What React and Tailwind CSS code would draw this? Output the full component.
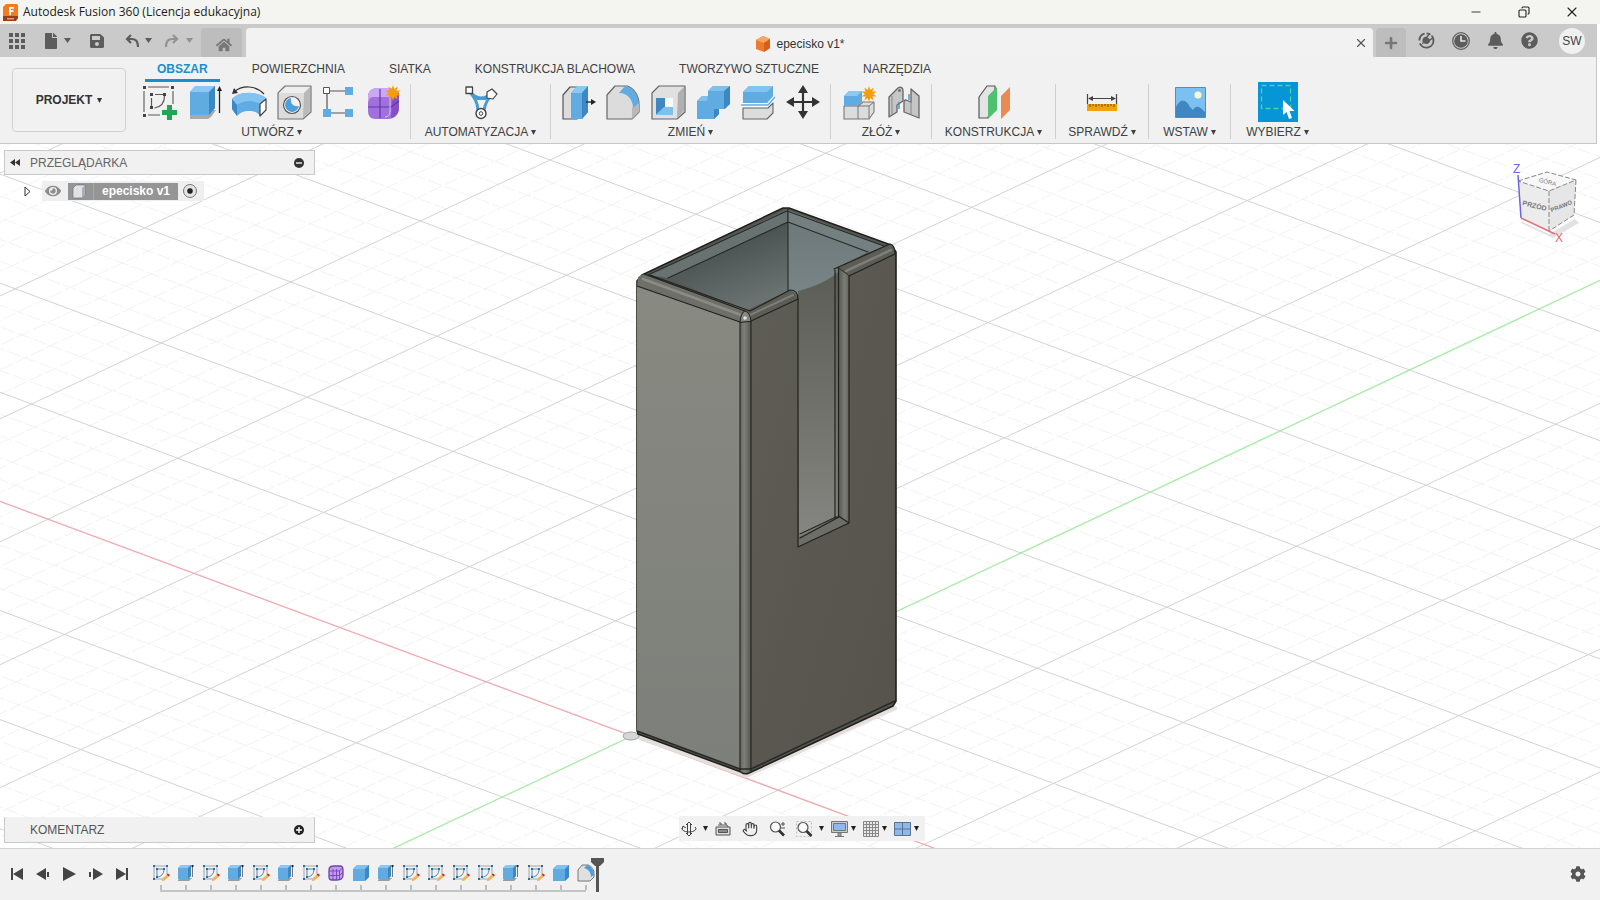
import React, { useState } from 'react'
import { FaBell, FaHome, FaPlus, FaSave, FaQuestionCircle, FaCog, FaFile, FaEye } from 'react-icons/fa'
import { Minus, X, Copy, Hand } from 'lucide-react'

const SKETCH_LINE = '#5a5a5a'
const BLUE = '#5fabe2'

function Caret({ large = false }) {
  return (
    <svg
      viewBox="0 0 7 6"
      preserveAspectRatio="none"
      className={large ? 'h-[5px] w-[7px] shrink-0' : 'h-[5px] w-[5px] shrink-0'}
      fill="currentColor"
      aria-hidden="true"
    >
      <path d="M0 0h7L3.500 6z" />
    </svg>
  )
}

function Icon({ children }) {
  return (
    <svg viewBox="0 0 36 36" className="h-9 w-9" fill="none" strokeLinejoin="round" aria-hidden="true">
      {children}
    </svg>
  )
}

function Burst({ cx, cy }) {
  const points = []
  for (let i = 0; i < 20; i++) {
    const r = i % 2 === 0 ? 8 : 4.2
    const a = (i * Math.PI) / 10
    points.push(`${cx + r * Math.sin(a)},${cy - r * Math.cos(a)}`)
  }
  return <polygon points={points.join(' ')} fill="#f59c0b" />
}

const icons = {
  sketch: (
    <Icon>
      <path d="M7 3h21M3 7v21M7 31h12M32 7v13" stroke={SKETCH_LINE} strokeWidth="1.100" />
      <path d="M14 10.500h8M10.500 14v8M23.500 12c0 7-4 11-10 12" stroke={SKETCH_LINE} strokeWidth="1.200" />
      <path d="M2 2h3v3H2zM30 2h3v3h-3zM2 30h3v3H2zM9 9h3v3H9zM22 9h3v3h-3zM9 22h3v3H9z" fill="#444" />
      <path d="M26 21h5v5h5v5h-5v5h-5v-5h-5v-5h5z" fill="#21a651" />
    </Icon>
  ),
  extrude: (
    <Icon>
      <path d="M4 31l6-5h20l-5 7-3 2H4z" fill="#a9a9a9" />
      <path d="M4 8l5-6h20v22l-6 7H4z" fill={BLUE} />
      <path d="M4 8l5-6h20l-6 6z" fill="#8cc8f2" />
      <path d="M23 8l6-6v22l-6 7z" fill="#3c88c4" />
      <path d="M33.500 29V6" stroke="#222" strokeWidth="1.300" />
      <path d="M31 7l2.500-5L36 7z" fill="#222" />
    </Icon>
  ),
  revolve: (
    <Icon>
      <path d="M3 8c8-7 22-7 30 2" stroke="#333" strokeWidth="1.200" />
      <path d="M1 10l2-6 4 5z" fill="#333" />
      <path d="M1 15c5-5 9-6 17-6s13 2 17 5l-6 5v13c-3-4-6-5-11-5s-8 1-12 5l-5-7z" fill={BLUE} />
      <path d="M1 15l5 6c7-5 17-5 23-1l6-6c-9-7-26-7-34 1z" fill="#83c3ef" />
      <path d="M6 21v11l-5-7V15z" fill="#3c88c4" />
      <path d="M29 20l6-5v11l-6 6z" fill="#fff" stroke="#444" strokeWidth="1.200" />
    </Icon>
  ),
  hole: (
    <Icon>
      <path d="M2 9l7-7h26v26l-8 7H2z" fill="#dcdcdc" stroke="#777" strokeWidth="1.200" />
      <path d="M3 9l7-6h24l-6 6z" fill="#eee" />
      <path d="M28 9l6-6v24l-7 7z" fill="#b9b9b9" />
      <circle cx="16" cy="21" r="8.500" fill="#f2f2f2" stroke="#555" strokeWidth="1.200" />
      <path d="M15 14a7 7 0 1 0 8 8c-5 1-9-2-8-8z" fill="#4d9fdb" />
    </Icon>
  ),
  pattern: (
    <Icon>
      <path d="M6 7h26M6 7v22M6 29h26" stroke="#555" strokeWidth="1.200" />
      <path d="M2.500 3.500h6v6h-6z" fill="#fff" stroke="#555" />
      <path d="M24 3h8v8h-8zM2 25h8v8H2zM24 25h8v8h-8z" fill={BLUE} />
    </Icon>
  ),
  form: (
    <Icon>
      <path d="M2 13c0-6 4-9 10-9h9c7 0 12 4 12 9v11c0 7-5 11-11 11H10c-6 0-8-3-8-9z" fill="#a070dc" />
      <path d="M2 13c0-6 4-9 10-9h9c5 0 8 2 10 5l-5 4H8c-4 0-5 2-6 6z" fill="#cba8f5" />
      <path d="M26 13c3-1 5-3 7-5v17c-1 5-4 8-8 9z" fill="#8550c4" />
      <path d="M14 5v29M2 23h23l8-6" stroke="#6636a8" strokeWidth="1.200" />
      <path d="M24 13v15c0 3-2 5-5 5" stroke="#d9bdf8" />
      <Burst cx={27} cy={9} />
    </Icon>
  ),
  automate: (
    <Icon>
      <path d="M6 7c4 4 7 7 12 7s8-2 12-5c-4 5-8 9-9 18h-6C15 18 11 13 6 7z" fill="#f4f4f4" stroke="#4a9ad4" strokeWidth="3" />
      <path d="M6 7c4 4 7 7 12 7s8-2 12-5l-7 7h-9z" fill="#4a9ad4" />
      <path d="M3 3h6.500v6.500H3z" fill="#fff" stroke="#444" strokeWidth="1.300" />
      <path d="M29 5l5 5-4 5-6-1v-6z" fill="#fff" stroke="#444" strokeWidth="1.200" />
      <circle cx="18" cy="29.500" r="5" fill="#fff" stroke="#444" strokeWidth="1.400" />
      <circle cx="18" cy="29.500" r="1.800" stroke="#444" />
    </Icon>
  ),
  pressPull: (
    <Icon>
      <path d="M3 11l7-8h7v32H3z" fill="#dcdcdc" stroke="#555" strokeWidth="1.200" />
      <path d="M11 9l6-7h11v26l-6 7H11z" fill={BLUE} />
      <path d="M11 9l6-7h11l-6 7z" fill="#8cc8f2" />
      <path d="M22 9l6-7v26l-6 7z" fill="#3c88c4" />
      <path d="M26 18h7" stroke="#222" strokeWidth="1.300" />
      <path d="M31 15l5 3-5 3z" fill="#222" />
    </Icon>
  ),
  fillet: (
    <Icon>
      <path d="M2 11l8-9h12c7 2 12 10 12 18v8l-7 7H2z" fill="#dcdcdc" stroke="#666" strokeWidth="1.200" />
      <path d="M27 24l7-5v9l-7 7z" fill="#b9b9b9" />
      <path d="M14 9l6-7c8 1 13 8 14 17l-6 5c0-8-5-15-14-15z" fill={BLUE} />
    </Icon>
  ),
  shell: (
    <Icon>
      <path d="M2 9l7-7h26v26l-8 7H2z" fill="#e0e0e0" stroke="#666" strokeWidth="1.200" />
      <path d="M28 9l6-6v24l-7 7z" fill="#b0b0b0" />
      <path d="M6 14h17v17H6z" fill="#fafafa" />
      <path d="M6 14h9v9l-9 8z" fill="#3c88c4" />
      <path d="M6 31l8-8h9v8z" fill="#7fc0ee" />
    </Icon>
  ),
  combine: (
    <Icon>
      <path d="M2 17l5-5h6V7l5-5h17v18l-5 5h-6v5l-5 5H2z" fill={BLUE} />
      <path d="M2 17l5-5h6l-1 5zM13 7l5-5h17l-6 5z" fill="#7fc0ee" />
      <path d="M29 7l6-5v18l-6 5zM19 25h5v5l-5 5z" fill="#3c88c4" />
    </Icon>
  ),
  split: (
    <Icon>
      <path d="M3 8l6-6h24v12l-6 6H3z" fill={BLUE} />
      <path d="M3 8l6-6h24l-6 6z" fill="#83c3ef" />
      <path d="M1 21h27l7-8" stroke="#fff" strokeWidth="4" />
      <path d="M1 21h27l7-8" stroke={BLUE} strokeWidth="1.400" />
      <path d="M3 24h25l5-5v10l-6 6H3z" fill="#dcdcdc" stroke="#666" strokeWidth="1.100" />
    </Icon>
  ),
  move: (
    <Icon>
      <path d="M18 6v24M6 18h24" stroke="#333" strokeWidth="2.200" />
      <path d="M18 1l5 8H13zM18 35l5-8H13zM1 18l8-5v10zM35 18l-8-5v10z" fill="#333" />
    </Icon>
  ),
  component: (
    <Icon>
      <path d="M3 22h14l5-4h11v10l-5 7H3z" fill="#dcdcdc" stroke="#777" strokeWidth="1.100" />
      <path d="M17 22v13M28 22v13M17 22h11l5-4" stroke="#777" />
      <path d="M3 12l5-5h13v11l-5 4H3z" fill={BLUE} />
      <path d="M3 12l5-5h13l-5 5z" fill="#8cc8f2" />
      <Burst cx={28} cy={10} />
    </Icon>
  ),
  joint: (
    <Icon>
      <path d="M3 13l9-9c3-2 5 0 5 3v10l-6 4v7l-8 5z" fill="#c6c6c6" stroke="#666" strokeWidth="1.300" />
      <path d="M6 12v19" stroke="#888" />
      <circle cx="13.500" cy="6.500" r="1.500" fill="#777" />
      <path d="M33 34V12l-8-7v13l-5-2c-2 0-2 1-2 2v10z" fill="#c6c6c6" stroke="#666" strokeWidth="1.300" />
      <path d="M25 18v12" stroke="#888" />
      <path d="M13 18v7M23 10v6" stroke="#3c88c4" strokeWidth="1.300" />
    </Icon>
  ),
  plane: (
    <Icon>
      <path d="M3 13l8-11h8v5l-7 27H3z" fill="#e4e4e4" stroke="#555" strokeWidth="1.200" />
      <path d="M12 12l9-9v23l-9 9z" fill="#4fbf72" />
      <path d="M25 12l9-9v23l-9 9z" fill="#e98a54" />
    </Icon>
  ),
  measure: (
    <Icon>
      <path d="M3.500 10v10M32.500 10v10M5 14.500h26" stroke="#444" strokeWidth="1.200" />
      <path d="M4 14.500l5-2.500v5zM32 14.500l-5-2.500v5z" fill="#444" />
      <path d="M3 20h30v7H3z" fill="#f5a10b" />
      <path d="M6 20v3M9 20v2M12 20v3M15 20v2M18 20v3M21 20v2M24 20v3M27 20v2M30 20v3" stroke="#6b4a08" />
    </Icon>
  ),
  image: (
    <Icon>
      <path d="M3.500 3.500h30v30h-30z" fill="#7cc0f2" stroke="#4a90c2" />
      <circle cx="26" cy="11" r="3.500" fill="#fdf8d0" />
      <path d="M4 23c4-8 9-9 14 0l3 3c3-5 6-4 12 2v5H4z" fill="#3f87c0" />
    </Icon>
  ),
}

const sketchFeature = (
  <svg viewBox="0 0 18 18" className="h-[18px] w-[18px]" fill="none" aria-hidden="true">
    <path d="M3 2h11M2 3v11M3 15h8M15 3v7" stroke="#8a979f" strokeWidth=".8" />
    <path d="M5 5h7M5 5v8c4 0 7-3 7-8" stroke="#4c87b3" />
    <path d="M1 1h2v2H1zM14 1h2v2h-2zM1 14h2v2H1zM4 4h2v2H4zM11 4h2v2h-2zM4 12h2v2H4z" fill="#2f6d9c" />
    <path d="M10.500 14.500l4.500-4 2 2-4.500 4-2.500.8z" fill="#f2b456" />
    <path d="M14.500 10.500L16 9.500l2 1.500-1.300 1.500z" fill="#d92525" />
  </svg>
)

const extrudeFeature = (
  <svg viewBox="0 0 18 18" className="h-[18px] w-[18px]" fill="none" aria-hidden="true">
    <path d="M1 16l2-2h12l-3 3H1z" fill="#9c9c9c" />
    <path d="M1 4l3-3h10v11l-3 3H1z" fill={BLUE} />
    <path d="M1 4l3-3h10l-3 3z" fill="#8cc8f2" />
    <path d="M11 4l3-3v11l-3 3z" fill="#3c88c4" />
    <path d="M15.500 13V3" stroke="#777" />
    <path d="M14.500 1h2v2h-2z" fill="#222" />
  </svg>
)

const boxFeature = (
  <svg viewBox="0 0 18 18" className="h-[18px] w-[18px]" aria-hidden="true">
    <path d="M1 5l4-4h12v12l-4 4H1z" fill={BLUE} />
    <path d="M1 5l4-4h12l-4 4z" fill="#7fc0ee" />
    <path d="M13 5l4-4v12l-4 4z" fill="#3c88c4" />
  </svg>
)

const formFeature = (
  <svg viewBox="0 0 18 18" className="h-[18px] w-[18px]" fill="none" aria-hidden="true">
    <path d="M2 6c0-3 2-4 5-4h6c3 0 3 2 3 4v5c0 4-3 5-6 5H5c-2 0-3-1-3-3z" fill="#c39bef" stroke="#6f42ad" strokeWidth="1.300" />
    <path d="M2 7h10l4-3M2 11.500h10l4-3M6 5v11M9.500 5v11M12.500 6v9" stroke="#7a4cb8" />
  </svg>
)

const filletFeature = (
  <svg viewBox="0 0 18 18" className="h-[18px] w-[18px]" aria-hidden="true">
    <path d="M1 6l4-5h6c4 1 6 5 6 9v3l-4 4H1z" fill="#e0e0e0" stroke="#777" />
    <path d="M7 4l3-3c4 1 7 5 7 10l-3 2c0-5-3-8-7-9z" fill="#4d9fdb" />
  </svg>
)

const featureIcons = {
  sketch: sketchFeature,
  extrude: extrudeFeature,
  box: boxFeature,
  form: formFeature,
  fillet: filletFeature,
}

const timeline = [
  'sketch', 'extrude', 'sketch', 'extrude', 'sketch', 'extrude', 'sketch', 'form', 'box',
  'extrude', 'sketch', 'sketch', 'sketch', 'sketch', 'extrude', 'sketch', 'box', 'fillet',
]

const tabs = [
  'OBSZAR',
  'POWIERZCHNIA',
  'SIATKA',
  'KONSTRUKCJA BLACHOWA',
  'TWORZYWO SZTUCZNE',
  'NARZĘDZIA',
]

const groups = [
  { label: 'UTWÓRZ', width: 'w-[278px]', tools: ['sketch', 'extrude', 'revolve', 'hole', 'pattern', 'form'] },
  { label: 'AUTOMATYZACJA', width: 'w-[140px]', tools: ['automate'] },
  { label: 'ZMIEŃ', width: 'w-[280px]', tools: ['pressPull', 'fillet', 'shell', 'combine', 'split', 'move'] },
  { label: 'ZŁÓŻ', width: 'w-[101px]', tools: ['component', 'joint'] },
  { label: 'KONSTRUKCJA', width: 'w-[124px]', tools: ['plane'] },
  { label: 'SPRAWDŹ', width: 'w-[93px]', tools: ['measure'] },
  { label: 'WSTAW', width: 'w-[82px]', tools: ['image'] },
]

function TitleBar() {
  return (
    <header className="flex h-6 shrink-0 items-center bg-[#f4f5f0] pl-[3px] pr-1">
      <svg viewBox="0 0 16 17" className="h-[17px] w-4" aria-hidden="true">
        <path d="M0 3l3-3h11l1 1v13l-3 3H0z" fill="#f47a1f" />
        <path d="M0 12h15v2l-2 3H0z" fill="#9c3d10" />
        <path d="M6 3h5v1.800H8v1.400h2.500V8H8v3H6z" fill="#fff" />
        <path d="M4 14h7v1.500H4z" fill="#e0a27c" />
      </svg>
      <h1 className="ml-1 flex-1 whitespace-nowrap font-['Open_Sans',sans-serif] text-[12px] text-[#1d1d1d]">
        Autodesk Fusion 360 (Licencja edukacyjna)
      </h1>
      <button aria-label="Minimalizuj" className="flex h-6 w-12 items-center justify-center text-[#222]">
        <Minus size={14} strokeWidth={1.5} />
      </button>
      <button aria-label="Przywróć" className="flex h-6 w-12 items-center justify-center text-[#222]">
        <Copy size={12} strokeWidth={2.2} className="-scale-x-100" />
      </button>
      <button aria-label="Zamknij" className="flex h-6 w-12 items-center justify-center text-[#222]">
        <X size={16} strokeWidth={1.7} />
      </button>
    </header>
  )
}

function DocumentBar() {
  return (
    <div className="mr-[3px] flex h-[33px] shrink-0 items-end bg-[#cacaca] text-[#5c5c5c]">
      <div className="flex h-[33px] w-[201px] items-center pl-[9px]">
        <button aria-label="Panel danych">
          <svg viewBox="0 0 16 16" className="h-4 w-4" fill="currentColor">
            <path d="M0 0h4v4H0zM6 0h4v4H6zM12 0h4v4h-4zM0 6h4v4H0zM6 6h4v4H6zM12 6h4v4h-4zM0 12h4v4H0zM6 12h4v4H6zM12 12h4v4h-4z" />
          </svg>
        </button>
        <button aria-label="Plik" className="ml-[18px] flex items-center gap-[5px]">
          <FaFile size={16} />
          <Caret large />
        </button>
        <button aria-label="Zapisz" className="ml-[18px]">
          <FaSave size={16} />
        </button>
        <button aria-label="Cofnij" className="ml-5 flex items-center gap-[6px]">
          <svg viewBox="0 0 14 14" className="h-[14px] w-[14px]" fill="none" stroke="currentColor" strokeWidth="2.200">
            <path d="M6 1L2 5l4 4M2 5h5c4 0 6 3 6 8" />
          </svg>
          <Caret large />
        </button>
        <button aria-label="Ponów" className="ml-[13px] flex items-center gap-[7px] text-[#929292]">
          <svg viewBox="0 0 14 14" className="h-[14px] w-[14px]" fill="none" stroke="currentColor" strokeWidth="2.200">
            <path d="M8 1l4 4-4 4M12 5H7c-4 0-6 3-6 8" />
          </svg>
          <Caret large />
        </button>
      </div>
      <button aria-label="Strona główna" className="flex h-[29px] w-[41px] items-center justify-center rounded-t bg-[#bdbdbd] pl-[5px] pt-1 text-[#777]">
        <FaHome size={16} />
      </button>
      <div className="ml-1 flex h-[29px] flex-1 items-center rounded-t bg-[#f2f2f2]">
        <div className="flex flex-1 items-center justify-center gap-[5px] pt-[2px] text-[12px] text-[#333]">
          <svg viewBox="0 0 16 16" className="h-4 w-4" aria-hidden="true">
            <path d="M8 0l7 3v9l-6 4-8-3V4z" fill="#ee7a30" />
            <path d="M8 0l7 3-6 4-8-3z" fill="#f9a566" />
            <path d="M9 7l6-4v9l-6 4z" fill="#d95e1a" />
          </svg>
          <span>epecisko v1*</span>
        </div>
        <button aria-label="Zamknij dokument" className="mr-[5px] text-[#555]">
          <X size={14} strokeWidth={2} />
        </button>
      </div>
      <button aria-label="Nowy dokument" className="ml-[3px] flex h-[29px] w-[30px] items-center justify-center rounded-t bg-[#bdbdbd] text-[#777]">
        <FaPlus size={14} />
      </button>
      <div className="flex h-[33px] items-center pl-3 pr-3">
        <button aria-label="Rozszerzenia">
          <svg viewBox="0 0 18 18" className="h-[17px] w-[17px]" fill="none">
            <path d="M9 1.500A7.500 7.500 0 1 1 2 12M1.500 9A7.500 7.500 0 0 1 7 1.800" stroke="currentColor" strokeWidth="2" />
            <path d="M3 14l3-2c4 2 7 0 7-4L9 5c-3 0-5 2-4 6z" fill="currentColor" />
            <path d="M9 6l3-4M12 9l4-3" stroke="currentColor" strokeWidth="1.600" />
            <path d="M12 4.500l3.500-2.500" stroke="#cacaca" strokeWidth="1.500" />
          </svg>
        </button>
        <button aria-label="Stan zadań" className="ml-[17px]">
          <svg viewBox="0 0 18 18" className="h-[18px] w-[18px]" fill="none">
            <circle cx="9" cy="9" r="8.300" stroke="currentColor" strokeWidth="1.200" />
            <circle cx="9" cy="9" r="6.800" fill="currentColor" />
            <path d="M9 4v5h4.500" stroke="#e6e6e6" strokeWidth="1.600" />
          </svg>
        </button>
        <button aria-label="Powiadomienia" className="ml-[17px]">
          <FaBell size={17} />
        </button>
        <button aria-label="Pomoc" className="ml-[17px]">
          <FaQuestionCircle size={17} />
        </button>
        <button className="ml-[21px] flex h-[26px] w-[26px] items-center justify-center rounded-full bg-[#f0f0f0] text-[12px] text-[#444]">
          SW
        </button>
      </div>
    </div>
  )
}

function Ribbon({ activeTab, onTabChange }) {
  return (
    <div className="mr-[3px] flex h-[87px] shrink-0 border-b border-r border-[#c6c6c6] bg-[#f1f1f1] text-[12px] text-[#404040]">
      <button className="ml-3 mt-[11px] flex h-[64px] w-[114px] shrink-0 items-center justify-center gap-[5px] rounded border border-[#d0d0d0] font-bold text-[#333]">
        PROJEKT
        <Caret />
      </button>
      <div className="ml-[7px]">
        <nav className="ml-3 flex h-[25px] gap-5">
          {tabs.map((tab) => (
            <button
              key={tab}
              onClick={() => onTabChange(tab)}
              className={`h-[25px] whitespace-nowrap border-b-3 px-3 pt-[2px] ${
                tab === activeTab ? 'border-[#1a8fd0] font-bold text-[#1a8fd0]' : 'border-transparent'
              }`}
            >
              {tab}
            </button>
          ))}
        </nav>
        <div className="mt-[2px] flex h-[55px]">
          {groups.map((group) => (
            <div key={group.label} className={`flex shrink-0 flex-col items-center justify-between border-r border-[#cfcfcf] ${group.width}`}>
              <div className="flex gap-[9px]">
                {group.tools.map((tool) => (
                  <button key={tool} aria-label={tool}>
                    {icons[tool]}
                  </button>
                ))}
              </div>
              <button className="flex items-center gap-[3px] whitespace-nowrap leading-[14px]">
                {group.label}
                <Caret />
              </button>
            </div>
          ))}
          <div className="flex w-[93px] flex-col items-center justify-between">
            <button aria-label="Wybierz" className="-mt-[2px]">
              <svg viewBox="0 0 40 40" className="h-10 w-10" fill="none">
                <path d="M0 0h40v40H0z" fill="#0696d7" />
                <path d="M3.500 3.500h29v23h-29z" stroke="#4fd0a0" strokeWidth="1.400" strokeDasharray="5 3" />
                <path d="M25 18v15l3.500-3 2.500 7 3-1-2.500-7h5z" fill="#fff" />
              </svg>
            </button>
            <button className="flex items-center gap-[3px] leading-[14px]">
              WYBIERZ
              <Caret />
            </button>
          </div>
        </div>
      </div>
    </div>
  )
}

// Ground plane: origin and the two major grid steps in screen units
const ORIGIN = [632, 736]
const STEP_X = [146, 54.2]
const STEP_Y = [129.6, -61]
const REACH = 16

function gridPoint(m, n) {
  return [
    ORIGIN[0] + m * STEP_X[0] + n * STEP_Y[0],
    ORIGIN[1] + m * STEP_X[1] + n * STEP_Y[1],
  ]
}

function gridPath(divisions) {
  let d = ''
  for (let i = -REACH * divisions; i <= REACH * divisions; i++) {
    if (divisions > 1 && i % divisions === 0) continue
    const k = i / divisions
    d += `M${gridPoint(k, -REACH)}L${gridPoint(k, REACH)}M${gridPoint(-REACH, k)}L${gridPoint(REACH, k)}`
  }
  return d
}

function Grid() {
  return (
    <g fill="none">
      <path d={gridPath(5)} stroke="#f3f3f3" strokeDasharray="14 3" />
      <path d={gridPath(1)} stroke="#d3d3d3" />
      <path d={`M${gridPoint(-REACH, 0)}L${gridPoint(REACH, 0)}`} stroke="#f6a9b0" strokeWidth="1.200" />
      <path d={`M${gridPoint(0, -REACH)}L${gridPoint(0, REACH)}`} stroke="#a6f0a6" strokeWidth="1.200" />
    </g>
  )
}

function Model() {
  return (
    <g strokeLinejoin="round" strokeLinecap="round">
      <defs>
        <linearGradient id="front" x1="0" y1="0" x2="0" y2="1">
          <stop offset="0" stopColor="#888981" />
          <stop offset="1" stopColor="#7d7f7a" />
        </linearGradient>
        <linearGradient id="side" x1="0" y1="0" x2="1" y2="1">
          <stop offset="0" stopColor="#5e5d56" />
          <stop offset="1" stopColor="#55534b" />
        </linearGradient>
        <linearGradient id="edge" x1="0" y1="0" x2="1" y2="0">
          <stop offset="0" stopColor="#666761" />
          <stop offset=".4" stopColor="#7e7f79" />
          <stop offset="1" stopColor="#55554f" />
        </linearGradient>
        <linearGradient id="innerLeft" x1="0" y1="0" x2=".5" y2="1">
          <stop offset="0" stopColor="#414848" />
          <stop offset=".45" stopColor="#4d5555" />
          <stop offset="1" stopColor="#6a7171" />
        </linearGradient>
        <linearGradient id="innerRight" x1="0" y1="0" x2="0" y2="1">
          <stop offset="0" stopColor="#6c7879" />
          <stop offset="1" stopColor="#7a8687" />
        </linearGradient>
        <linearGradient id="slot" x1="0" y1="0" x2="0" y2="1">
          <stop offset="0" stopColor="#5d5d57" />
          <stop offset=".5" stopColor="#71716b" />
          <stop offset="1" stopColor="#858681" />
        </linearGradient>
        <linearGradient id="slotEdge" x1="0" y1="0" x2="1" y2="0">
          <stop offset="0" stopColor="#55554f" />
          <stop offset=".6" stopColor="#7b7c76" />
          <stop offset="1" stopColor="#63635c" />
        </linearGradient>
      </defs>

      <path d="M640 738L746 776L895 708" fill="none" stroke="#e4dede" strokeWidth="4" />
      <ellipse cx="631" cy="736" rx="8" ry="4" fill="#d6d6d6" stroke="#a5a5a5" />

      <path d="M637 281L642 275L783 208L789 208L891 245L896 252V701L893 706L749 773Q745 775 741 772L638 734L637 729Z" fill="#555751" stroke="#20201c" strokeWidth="1.600" />

      {/* inside of the box */}
      <path d="M648 275L787 210V222L668 278Z" fill="#687371" />
      <path d="M788 210L884 246L868 253L788 222Z" fill="#748080" />
      <path d="M668 278L788 222V300L745 311Z" fill="url(#innerLeft)" />
      <path d="M788 222L868 252L838 268V290L800 300L788 291Z" fill="url(#innerRight)" />
      <path d="M798 291Q825 284 838 272V518L799 537Z" fill="url(#slot)" />
      <path d="M648 275L787 211L884 246M668 278L788 222L868 252M788 209V291" fill="none" stroke="#252a29" strokeWidth="1.100" />

      {/* outer faces */}
      <path d="M637 286L740 322V769L637 731Z" fill="url(#front)" />
      <path d="M751 321L798 299V547L849 523V276L895 254V701L751 769Z" fill="url(#side)" />
      <path d="M740 319H751V771Q746 775 740 771Z" fill="url(#edge)" />
      <path d="M637 731L740 769L751 769L895 701" fill="none" stroke="#292924" strokeWidth="1.600" />
      <path d="M740 319V771M751 319V771" fill="none" stroke="#24241f" strokeWidth="1.100" />

      {/* rounded rim */}
      <path d="M637 286L638 277L644 274L745 311L740 322Z" fill="#6e6f69" />
      <path d="M643 279L741 315" fill="none" stroke="#8b8c85" strokeWidth="2.500" />
      <path d="M745 311L789 291Q796 290 798 299L751 321Z" fill="#5c5d57" />
      <path d="M750 315L793 295" fill="none" stroke="#7d7e78" strokeWidth="2" />
      <path d="M637 286L740 322M644 274L745 311M650 275L750 311L790 290Q798 290 798 299L751 321" fill="none" stroke="#22221e" strokeWidth="1.200" />
      <path d="M740 322Q741 312 745 311Q750 312 751 321Z" fill="#85867f" stroke="#22221e" />
      <circle cx="745" cy="318" r="1.800" fill="#e4e5df" />
      <path d="M838 268L890 244Q895 245 895 254L849 276Z" fill="#5c5d57" />
      <path d="M846 271L891 250" fill="none" stroke="#7d7e78" strokeWidth="2.500" />
      <path d="M834 269L890 244Q895 245 895 254L849 276L838 268" fill="none" stroke="#22221e" strokeWidth="1.200" />

      {/* slot edges */}
      <path d="M838 268L849 276V523L838 516Z" fill="url(#slotEdge)" />
      <path d="M838 516L849 523L798 547L799 537Z" fill="#6d6e68" />
      <path d="M835 270V517M838.500 268V516L849 523V276M798 299V547L849 523M800 534L836 517L839 517L800 538" fill="none" stroke="#22221e" strokeWidth="1.200" />
    </g>
  )
}

function ViewCube() {
  return (
    <svg viewBox="0 0 70 90" className="absolute right-[17px] top-[15px] h-[90px] w-[70px]">
      <path d="M8 62L36 75L62 60L66 64L40 79L8 64Z" fill="#e2e2e2" />
      <path d="M5 22L34 13L63 21L36 32Z" fill="#f8f8f8" />
      <path d="M5 22L36 32V72L8 59Z" fill="#ececec" />
      <path d="M36 32L63 21L61 56L36 72Z" fill="#e6e6e6" />
      <path d="M5 22L34 13L63 21L36 32ZM36 32V72M63 21L61 56L36 72" fill="none" stroke="#888" strokeDasharray="5 2" />
      <path d="M5 16L8 59" stroke="#6b66dc" strokeWidth="1.500" />
      <path d="M8 59L42 75" stroke="#dc7280" strokeWidth="1.500" />
      <g fill="#777" fontSize="7" fontWeight="bold" textAnchor="middle">
        <text x="21" y="49" transform="rotate(14 21 49)">PRZÓD</text>
        <text x="49" y="49" fontSize="6" transform="rotate(-22 49 49)">PRAWO</text>
        <text x="34" y="25" fontSize="6" fontWeight="normal" transform="rotate(14 34 25)">GÓRA</text>
      </g>
      <text x="0" y="14" fontSize="12" fill="#6b66dc">Z</text>
      <text x="42" y="83" fontSize="12" fill="#e2656c">X</text>
    </svg>
  )
}

function BrowserPanel() {
  return (
    <div className="absolute left-1 top-[6px] w-[311px]">
      <div className="flex h-[25px] items-center border border-[#c9c9c9] bg-[#f1f1f1] pl-[5px] pr-[10px] text-[12px] text-[#666]">
        <button aria-label="Zwiń panel">
          <svg viewBox="0 0 10 7" className="h-[7px] w-[10px]" fill="#333">
            <path d="M5 0v7L0 3.500zM10 0v7L5 3.500z" />
          </svg>
        </button>
        <h2 className="ml-[10px] flex-1">PRZEGLĄDARKA</h2>
        <button aria-label="Ukryj">
          <svg viewBox="0 0 10 10" className="h-[10px] w-[10px]">
            <circle cx="5" cy="5" r="5" fill="#333" />
            <path d="M2 4.200h6v1.600H2z" fill="#ddd" />
          </svg>
        </button>
      </div>
      <div className="mt-[6px] flex h-[20px] items-center pl-5">
        <button aria-label="Rozwiń" className="mr-[11px]">
          <svg viewBox="0 0 7 11" className="h-[11px] w-[7px]" fill="#fff" stroke="#333">
            <path d="M1 1l5 4.500L1 10z" />
          </svg>
        </button>
        <div className="flex h-[20px] items-center bg-[#efefef] pl-[3px] pr-[7px]">
          <button aria-label="Widoczność" className="mr-[7px] text-[#8d8d8d]">
            <FaEye size={16} />
          </button>
          <div className="flex h-[17px] w-[110px] items-center bg-[#959595] text-[12px] font-bold text-white">
            <span className="flex h-[17px] w-[26px] items-center border-r border-[#a8a8a8] pl-1">
              <svg viewBox="0 0 14 15" className="h-[15px] w-[14px]">
                <path d="M1 4l3-3h9v10l-3 3H1z" fill="#dfe3e6" stroke="#6e747a" strokeWidth=".7" />
                <path d="M10 4l3-3v10l-3 3z" fill="#aab0b5" />
              </svg>
            </span>
            <span className="flex-1 text-center">epecisko v1</span>
          </div>
          <input
            type="radio"
            name="component"
            aria-label="Aktywuj komponent"
            defaultChecked
            className="ml-[5px] h-[14px] w-[14px] appearance-none rounded-full border border-[#777] bg-radial from-[#222] from-25% to-[#e4e4e4] to-40%"
          />
        </div>
      </div>
    </div>
  )
}

function CommentPanel() {
  return (
    <div className="absolute bottom-[5px] left-1 flex h-[26px] w-[311px] items-center border-x border-b border-[#c9c9c9] bg-[#f1f1f1] pl-[25px] pr-[10px] text-[12px] text-[#555]">
      <h2 className="flex-1">KOMENTARZ</h2>
      <button aria-label="Dodaj komentarz">
        <svg viewBox="0 0 10 10" className="h-[10px] w-[10px]">
          <circle cx="5" cy="5" r="5" fill="#222" />
          <path d="M2 4.300h2.300V2h1.400v2.300H8v1.400H5.700V8H4.300V5.700H2z" fill="#fff" />
        </svg>
      </button>
    </div>
  )
}

function NavBar() {
  return (
    <div className="absolute bottom-[7px] left-1/2 ml-[-121px] flex h-[25px] w-[246px] items-center bg-[#f1f1f1] pl-[2px] text-[#222]">
      <button aria-label="Orbita" className="flex items-center gap-[6px]">
        <svg viewBox="0 0 16 16" className="h-4 w-4" fill="none" stroke="#444">
          <path d="M2 6C-1 9 4 11 8 11s9-2 6-5M6.500 3v10M9.500 3v10M5 4l3-3 3 3M5 12l3 3 3-3M1 8l1-3 3 2" />
        </svg>
        <Caret />
      </button>
      <button aria-label="Patrz na" className="ml-[7px]">
        <svg viewBox="0 0 16 16" className="h-4 w-4" fill="none" stroke="#555">
          <path d="M1 6h14v8H1z" fill="#ddd" />
          <path d="M3 4h9l1 2M4 2h2v2M9 2h2v2" />
          <path d="M3.500 8.500h9v3h-9z" fill="#8b8b8b" />
        </svg>
      </button>
      <button aria-label="Przesuń" className="ml-[11px]">
        <Hand size={16} strokeWidth={1.7} color="#444" />
      </button>
      <button aria-label="Powiększ" className="ml-[11px]">
        <svg viewBox="0 0 17 16" className="h-4 w-[17px]" fill="none" stroke="#555">
          <circle cx="6.500" cy="6" r="5" fill="#fafafa" strokeWidth="1.200" />
          <path d="M10 9.500l5 5" stroke="#333" strokeWidth="2.600" />
          <path d="M12 3h4M14 1v4M12 7h4" />
        </svg>
      </button>
      <button aria-label="Dopasuj" className="ml-[10px] flex items-center gap-[6px]">
        <svg viewBox="0 0 17 16" className="h-4 w-[17px]" fill="none" stroke="#555">
          <path d="M.5.5h15v15H.5z" stroke="#bbb" strokeDasharray="2 2" />
          <circle cx="7" cy="6.500" r="5" fill="#fafafa" strokeWidth="1.200" />
          <path d="M10.500 10l5 5" stroke="#333" strokeWidth="2.600" />
        </svg>
        <Caret />
      </button>
      <button aria-label="Ustawienia wyświetlania" className="ml-[7px] flex items-center gap-[3px]">
        <svg viewBox="0 0 17 16" className="h-4 w-[17px]" stroke="#777">
          <path d="M.5.5h16v11H.5z" fill="#ccc" />
          <path d="M2.500 2.500h12v7h-12z" fill="#8db9ec" />
          <path d="M7 12h3v3H7zM4 15.500h9" fill="#aaa" />
        </svg>
        <Caret />
      </button>
      <button aria-label="Siatka" className="ml-[7px] flex items-center gap-[3px]">
        <svg viewBox="0 0 16 16" className="h-4 w-4" stroke="#888" fill="#e9e9e9">
          <path d="M.5.5h15v15H.5zM.5 3.500h15M.5 6.500h15M.5 9.500h15M.5 12.500h15M3.500.5v15M6.500.5v15M9.500.5v15M12.500.5v15" />
        </svg>
        <Caret />
      </button>
      <button aria-label="Rzutnie" className="ml-[7px] flex items-center gap-[3px]">
        <svg viewBox="0 0 17 14" className="h-[14px] w-[17px]" stroke="#5b7391" fill="#8db9ec">
          <path d="M.5.5h16v13H.5zM8.500.5v13M.5 7h16" />
        </svg>
        <Caret />
      </button>
    </div>
  )
}

function Viewport() {
  return (
    <main className="relative min-h-0 flex-1 overflow-hidden bg-white">
      <svg viewBox="0 144 1600 704" preserveAspectRatio="xMidYMid slice" className="block h-full w-full">
        <Grid />
        <Model />
      </svg>
      <BrowserPanel />
      <ViewCube />
      <NavBar />
      <CommentPanel />
    </main>
  )
}

function Timeline() {
  return (
    <footer className="flex h-[52px] shrink-0 border-t border-[#d2d2d2] bg-[#f1f1f1] text-[#444]">
      <div className="flex h-[50px] w-[148px] shrink-0 items-center gap-[13px] pl-[11px]">
        <button aria-label="Początek">
          <svg viewBox="0 0 12 12" className="h-3 w-3" fill="currentColor"><path d="M0 0h2v12H0zM12 0v12L2 6z" /></svg>
        </button>
        <button aria-label="Krok wstecz">
          <svg viewBox="0 0 14 12" className="h-3 w-[14px]" fill="currentColor"><path d="M10 0v12L0 6zM11 4h2v5h-2z" /></svg>
        </button>
        <button aria-label="Odtwórz">
          <svg viewBox="0 0 13 14" className="h-[14px] w-[13px]" fill="currentColor"><path d="M0 0l13 7-13 7z" /></svg>
        </button>
        <button aria-label="Krok naprzód">
          <svg viewBox="0 0 14 12" className="h-3 w-[14px]" fill="currentColor"><path d="M4 0v12l10-6zM0 4h2v5H0z" /></svg>
        </button>
        <button aria-label="Koniec">
          <svg viewBox="0 0 12 12" className="h-3 w-3" fill="currentColor"><path d="M10 0h2v12h-2zM0 0v12l10-6z" /></svg>
        </button>
      </div>
      <div className="flex pt-[15px]">
        {timeline.map((type, i) => (
          <button key={i} aria-label={`${type} ${i + 1}`} className="flex h-[28px] w-[25px] flex-col items-center justify-between">
            {featureIcons[type]}
            <span className="flex w-full flex-col items-center">
              <span className="h-[5px] w-[2px] bg-[#bdbdbd]" />
              <span className={`h-[2px] bg-[#c4c4c4] ${i === 0 ? 'w-[13px] self-end' : i === timeline.length - 1 ? 'w-[13px] self-start' : 'w-full'}`} />
            </span>
          </button>
        ))}
      </div>
      <svg viewBox="0 0 13 34" className="-ml-[7px] mt-[9px] h-[34px] w-[13px]" fill="#555" aria-hidden="true">
        <path d="M0 0h13v4L9 8H4L0 4zM5 8h3v26H5z" />
      </svg>
      <button aria-label="Ustawienia osi czasu" className="mb-[2px] ml-auto mr-[14px] text-[#555]">
        <FaCog size={16} />
      </button>
    </footer>
  )
}

export default function App() {
  const [activeTab, setActiveTab] = useState('OBSZAR')

  return (
    <div className="flex h-screen w-full flex-col overflow-hidden bg-white font-['Liberation_Sans',Arial,sans-serif]">
      <TitleBar />
      <DocumentBar />
      <Ribbon activeTab={activeTab} onTabChange={setActiveTab} />
      <Viewport />
      <Timeline />
    </div>
  )
}
